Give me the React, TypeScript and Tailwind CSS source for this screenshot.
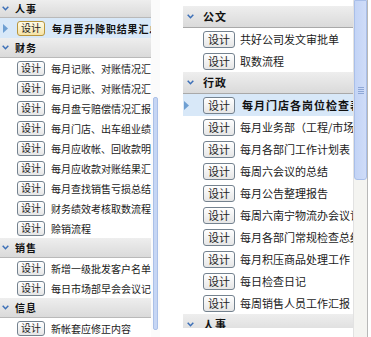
import React from "react";

const FONT = { fontFamily: '"Noto Sans CJK SC", "Noto Sans", sans-serif' };

function Chevron({ cls }: { cls: string }) {
  return (
    <svg width="7" height="5" viewBox="0 0 7 5" className={cls}>
      <polyline points="0.7,0.7 3.5,3.7 6.3,0.7" fill="none" stroke="#3d70b8" strokeWidth="1.5" />
    </svg>
  );
}

function Tri({ cls }: { cls: string }) {
  return (
    <svg width="5" height="9" viewBox="0 0 5 9" className={cls}>
      <polygon points="0,0 5,4.5 0,9" fill="#6e9fd2" />
    </svg>
  );
}

function LBtn({ hot }: { hot?: boolean }) {
  return (
    <span
      className={
        "flex items-center justify-center w-[28px] h-[15px] shrink-0 rounded-[3px] border text-[10px] leading-none text-[#222] " +
        (hot
          ? "border-[#b8963e] bg-gradient-to-b from-[#fffbe6] to-[#f6e3a6]"
          : "border-[#74828f] bg-gradient-to-b from-[#ffffff] to-[#e6e6e6]")
      }
    >
      设计
    </span>
  );
}

function RBtn() {
  return (
    <span className="flex items-center justify-center w-[32px] h-[17px] shrink-0 rounded-[3px] border border-[#74828f] bg-gradient-to-b from-[#ffffff] to-[#e6e6e6] text-[11px] leading-none text-[#222]">
      设计
    </span>
  );
}

function LHeader({ title, h = "h-[20px]" }: { title: string; h?: string }) {
  return (
    <div className={"flex items-center shrink-0 bg-gradient-to-b from-[#eeeeee] to-[#dadada] border-b border-[#b9b9b9] " + h}>
      <Chevron cls="ml-[2px] mr-[6px]" />
      <span className="text-[10px] font-bold tracking-[1px] text-[#111]">{title}</span>
    </div>
  );
}

function LRow({ text }: { text: string }) {
  return (
    <div className="flex items-center h-[20px] shrink-0 pl-[17px] whitespace-nowrap overflow-hidden">
      <LBtn />
      <span className="ml-[6px] text-[10px] text-[#1a1a1a]">{text}</span>
    </div>
  );
}

function RHeader({ title }: { title: string }) {
  return (
    <div className="flex items-center h-[22px] shrink-0 bg-gradient-to-b from-[#eeeeee] to-[#dadada] border-b border-[#a9a9a9]">
      <Chevron cls="ml-[4px] mr-[9px]" />
      <span className="text-[11px] font-bold tracking-[1px] text-[#111]">{title}</span>
    </div>
  );
}

function RRow({ text }: { text: string }) {
  return (
    <div className="flex items-center h-[22px] shrink-0 pl-[20px] whitespace-nowrap overflow-hidden">
      <RBtn />
      <span className="ml-[5px] text-[11px] text-[#1a1a1a]">{text}</span>
    </div>
  );
}

export default function App() {
  const finance = [
    "每月记账、对账情况汇总",
    "每月记账、对账情况汇总",
    "每月盘亏赔偿情况汇报",
    "每月门店、出车组业绩",
    "每月应收帐、回收款明细",
    "每月应收款对账结果汇总",
    "每月查找销售亏损总结",
    "财务绩效考核取数流程",
    "赊销流程",
  ];
  const sales = ["新增一级批发客户名单", "每日市场部早会会议记录"];
  const info = ["新帐套应修正内容"];
  const admin = [
    "每月业务部（工程/市场部",
    "每月各部门工作计划表",
    "每周六会议的总结",
    "每月公告整理报告",
    "每周六南宁物流办会议记录",
    "每月各部门常规检查总结",
    "每月积压商品处理工作",
    "每日检查日记",
    "每周销售人员工作汇报",
  ];

  return (
    <div className="w-[371px] h-[337px] flex bg-white overflow-hidden" style={FONT}>
      {/* left panel */}
      <div className="flex w-[160px] h-[337px] shrink-0">
        <div className="flex flex-col w-[151px] h-[337px] overflow-hidden">
          <LHeader title="人事" h="h-[18px]" />
          <div className="flex items-center h-[20px] shrink-0 bg-[#d8e8f8] whitespace-nowrap overflow-hidden">
            <Tri cls="ml-[3px] mr-[9px] shrink-0" />
            <LBtn hot />
            <span className="ml-[7px] text-[10px] font-bold tracking-[0.8px] text-[#111]">每月晋升降职结果汇总</span>
          </div>
          <LHeader title="财务" />
          {finance.map((t, i) => (
            <LRow key={i} text={t} />
          ))}
          <LHeader title="销售" />
          {sales.map((t, i) => (
            <LRow key={i} text={t} />
          ))}
          <LHeader title="信息" />
          {info.map((t, i) => (
            <LRow key={i} text={t} />
          ))}
        </div>
        <div className="flex flex-col w-[9px] h-[337px] pt-[97px] pb-[7px] bg-[#fbfbfb]">
          <div className="ml-[2px] w-[5px] flex-1 rounded-[2px] bg-[#c6d6f4] border border-[#aac0e8]" />
        </div>
      </div>

      {/* right panel */}
      <div className="flex ml-[23px] h-[337px]">
        <div className="flex flex-col w-[170px] pt-[6px]">
          <div className="flex flex-col h-[322px] overflow-hidden">
            <RHeader title="公文" />
            <RRow text="共好公司发文审批单" />
            <RRow text="取数流程" />
            <RHeader title="行政" />
            <div className="flex items-center h-[22px] shrink-0 bg-[#d8e8f8] whitespace-nowrap overflow-hidden">
              <Tri cls="ml-[1px] mr-[14px] shrink-0" />
              <RBtn />
              <span className="ml-[7px] text-[11px] font-bold tracking-[1px] text-[#111]">每月门店各岗位检查表</span>
            </div>
            {admin.map((t, i) => (
              <RRow key={i} text={t} />
            ))}
            <RHeader title="人事" />
          </div>
        </div>
        <div className="flex flex-col w-[14px] h-[337px] bg-[#f4f4f1] border-l border-[#e2e2e2]">
          <div className="flex items-center justify-center w-[13px] h-[180px] rounded-b-[3px] bg-gradient-to-r from-[#c3d4f6] to-[#cfdcf8] border border-[#a9bfe9]">
            <div className="flex flex-col gap-[1px]">
              <div className="w-[6px] h-[1px] bg-[#8ea7d6]" />
              <div className="w-[6px] h-[1px] bg-[#8ea7d6]" />
              <div className="w-[6px] h-[1px] bg-[#8ea7d6]" />
              <div className="w-[6px] h-[1px] bg-[#8ea7d6]" />
            </div>
          </div>
        </div>
        <div className="w-[1px] h-[337px] bg-[#b8b8b8]" />
      </div>
    </div>
  );
}
